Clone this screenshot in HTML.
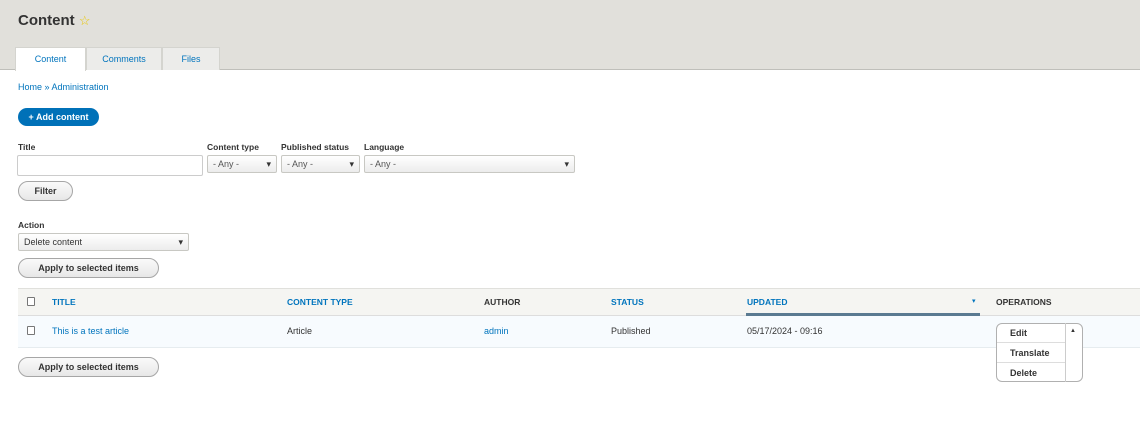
<!DOCTYPE html>
<html><head><style>
*{box-sizing:border-box;margin:0;padding:0}
body{width:1140px;height:436px;background:#fff;font-family:"Liberation Sans",sans-serif;font-size:9px;color:#333;position:relative;overflow:hidden}
.a{position:absolute}
.hdr{left:0;top:0;width:1140px;height:70px;background:#e1e0db;border-bottom:1px solid #bfbfba}
h1{position:absolute;left:18px;top:12px;font-size:15px;font-weight:bold;color:#333}
.tab{position:absolute;top:47px;height:23px;background:#ececea;border:1px solid #d4d4cf;border-bottom:none;color:#0074bd;text-align:center;line-height:22px;font-size:9px}
.lnk{color:#0074bd}
.lbl{font-weight:bold;font-size:8.5px;color:#333}
.sel{position:absolute;height:18px;border:1px solid #c8c8c3;border-radius:2px;background:linear-gradient(#fff,#ececec);font-size:9px;color:#555;line-height:16px;padding-left:5px}
.sel:after{content:"▾";position:absolute;right:5px;top:0;font-size:9px;color:#333}
.btn{position:absolute;height:20px;border:1px solid #a6a6a6;border-radius:10px;background:linear-gradient(#fafafa,#e7e7e7);font-weight:bold;font-size:9px;text-align:center;line-height:18px;color:#333}
.cb{position:absolute;width:8px;height:9px;border:1px solid #777;border-radius:1px;background:#fff}
</style></head><body>
<div class="a hdr"></div>
<h1>Content <span style="color:#e9c600;font-size:13px;font-weight:normal">☆</span></h1>
<div class="tab" style="left:15px;width:71px;background:#fff;height:24px">Content</div>
<div class="tab" style="left:86px;width:76px">Comments</div>
<div class="tab" style="left:162px;width:58px">Files</div>
<div class="a lnk" style="left:18px;top:82px">Home » Administration</div>
<div class="a" style="left:18px;top:108px;width:81px;height:18px;border-radius:9px;background:#0071b8;color:#fff;font-weight:bold;text-align:center;line-height:18px">+ Add content</div>
<div class="a lbl" style="left:18px;top:142px">Title</div>
<div class="a lbl" style="left:207px;top:142px">Content type</div>
<div class="a lbl" style="left:281px;top:142px">Published status</div>
<div class="a lbl" style="left:364px;top:142px">Language</div>
<div class="a" style="left:17px;top:155px;width:186px;height:21px;border:1px solid #ccc;border-radius:2px"></div>
<div class="sel" style="left:207px;top:155px;width:70px">- Any -</div>
<div class="sel" style="left:281px;top:155px;width:79px">- Any -</div>
<div class="sel" style="left:364px;top:155px;width:211px">- Any -</div>
<div class="btn" style="left:18px;top:181px;width:55px">Filter</div>
<div class="a lbl" style="left:18px;top:220px">Action</div>
<div class="sel" style="left:18px;top:233px;width:171px;color:#333">Delete content</div>
<div class="btn" style="left:18px;top:258px;width:141px">Apply to selected items</div>
<div class="a" style="left:18px;top:288px;width:1122px;height:28px;background:#f5f5f2;border-top:1px solid #e0e0dc;border-bottom:1px solid #ddd"></div>
<div class="a" style="left:746px;top:313px;width:234px;height:3px;background:#5a7a91"></div>
<div class="cb" style="left:27px;top:297px"></div>
<div class="a lnk" style="left:52px;top:297px;font-weight:bold;font-size:8.5px">TITLE</div>
<div class="a lnk" style="left:287px;top:297px;font-weight:bold;font-size:8.5px">CONTENT TYPE</div>
<div class="a" style="left:484px;top:297px;font-weight:bold;font-size:8.5px">AUTHOR</div>
<div class="a lnk" style="left:611px;top:297px;font-weight:bold;font-size:8.5px">STATUS</div>
<div class="a lnk" style="left:747px;top:297px;font-weight:bold;font-size:8.5px">UPDATED</div>
<div class="a lnk" style="left:972px;top:297px;font-size:7px">▾</div>
<div class="a" style="left:996px;top:297px;font-weight:bold;font-size:8.5px">OPERATIONS</div>
<div class="a" style="left:18px;top:316px;width:1122px;height:32px;background:#f7fbfe;border-bottom:1px solid #e6ecef"></div>
<div class="cb" style="left:27px;top:326px"></div>
<div class="a lnk" style="left:52px;top:326px">This is a test article</div>
<div class="a" style="left:287px;top:326px">Article</div>
<div class="a lnk" style="left:484px;top:326px">admin</div>
<div class="a" style="left:611px;top:326px">Published</div>
<div class="a" style="left:747px;top:326px">05/17/2024 - 09:16</div>
<div class="a" style="left:996px;top:323px;width:87px;height:59px;border:1px solid #b0b0b0;border-radius:6px;background:#fff"></div>
<div class="a" style="left:1065px;top:323px;width:1px;height:59px;background:#ccc"></div>
<div class="a" style="left:997px;top:342px;width:68px;height:1px;background:#ddd"></div>
<div class="a" style="left:997px;top:362px;width:68px;height:1px;background:#ddd"></div>
<div class="a" style="left:1010px;top:328px;font-weight:bold">Edit</div>
<div class="a" style="left:1010px;top:348px;font-weight:bold">Translate</div>
<div class="a" style="left:1010px;top:368px;font-weight:bold">Delete</div>
<div class="a" style="left:1070px;top:328px;font-size:6px">▲</div>
<div class="btn" style="left:18px;top:357px;width:141px">Apply to selected items</div>
</body></html>
